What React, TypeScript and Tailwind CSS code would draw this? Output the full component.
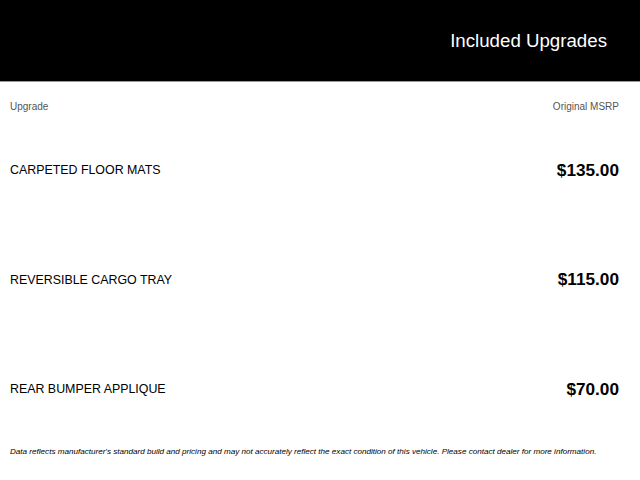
import React from 'react';

const UPGRADES: Array<{ name: string; msrp: string }> = [
  { name: 'CARPETED FLOOR MATS', msrp: '$135.00' },
  { name: 'REVERSIBLE CARGO TRAY', msrp: '$115.00' },
  { name: 'REAR BUMPER APPLIQUE', msrp: '$70.00' },
];

export default function App() {
  return (
    <div className="w-[640px] h-[480px] bg-white font-['Liberation_Sans',Arial,sans-serif] overflow-hidden">
      <header className="h-[82px] bg-black border-b border-[#9a9a9a] flex items-center justify-end pr-[33px] pt-[2px]">
        <h1 className="text-[18.7px] leading-none text-white">Included Upgrades</h1>
      </header>

      <div className="flex justify-between pl-[10px] pr-[21px] pt-[18px] text-[10px] leading-[14px] text-[#555]">
        <span>Upgrade</span>
        <span>Original MSRP</span>
      </div>

      <div className="pt-[2px]">
        {UPGRADES.map(u => (
          <div
            key={u.name}
            className="h-[109.5px] flex items-center justify-between pl-[10px] pr-[21px]"
          >
            <span className="text-[12.4px] text-black">{u.name}</span>
            <span className="text-[17.2px] font-bold text-black">{u.msrp}</span>
          </div>
        ))}
      </div>

      <p className="px-[10px] pt-[1px] text-[8.1px] leading-[11px] italic text-black">
        Data reflects manufacturer's standard build and pricing and may not accurately reflect the
        exact condition of this vehicle. Please contact dealer for more information.
      </p>
    </div>
  );
}
